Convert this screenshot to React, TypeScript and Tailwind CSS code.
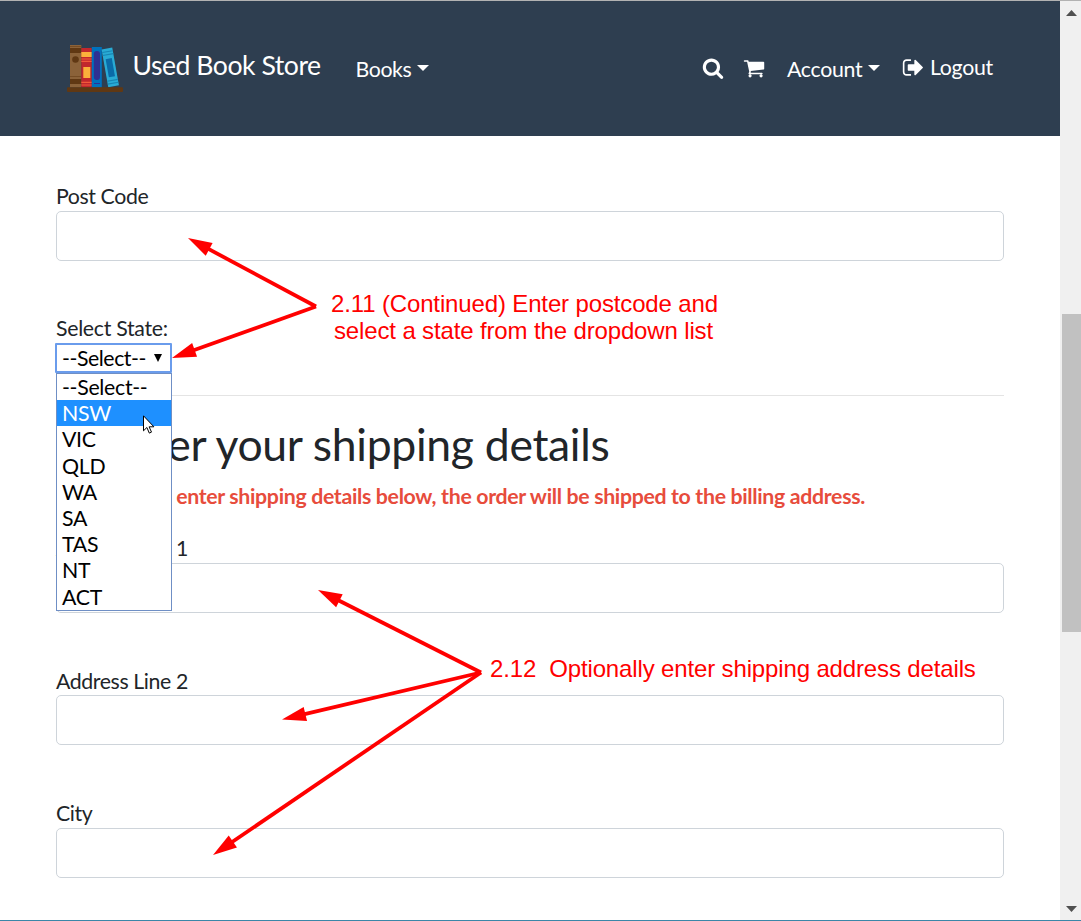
import React from "react";

const states = ["--Select--", "NSW", "VIC", "QLD", "WA", "SA", "TAS", "NT", "ACT"];

const arrows = [
  { x1: 316, y1: 305.5, x2: 188, y2: 237 },
  { x1: 316, y1: 305.5, x2: 172, y2: 357 },
  { x1: 481, y1: 671.5, x2: 318, y2: 589 },
  { x1: 481, y1: 671.5, x2: 282, y2: 718.5 },
  { x1: 481, y1: 671.5, x2: 213, y2: 854 },
];

function Books() {
  return (
    <svg className="h-[48px] w-[56px] shrink-0" viewBox="0 0 56 48">
      <rect x="3" y="0" width="11.3" height="42.5" fill="#8b6239" />
      <rect x="3" y="3" width="11.3" height="5" fill="#603813" />
      <rect x="3" y="34" width="11.3" height="5" fill="#603813" />
      <path d="M3 1.5h11.3M3 31.5h11.3" stroke="#754c24" />
      <circle cx="8.5" cy="14.5" r="3.3" fill="#603813" />
      <rect x="14.3" y="3" width="10.5" height="39.5" fill="#c1272d" />
      <rect x="14.3" y="7" width="10.5" height="5" fill="#fbb03b" />
      <rect x="16.3" y="22" width="7" height="11" fill="#fbb03b" />
      <path d="M14.3 14h10.5M14.3 16.3h10.5M14.3 37.3h10.5M14.3 40h10.5" stroke="#f15a3a" strokeWidth="1.2" />
      <rect x="24.8" y="2" width="10" height="40.5" fill="#0071bc" />
      <rect x="26.8" y="6" width="6.2" height="29" rx="3" fill="#2e3192" />
      <path d="M27 38.5h6" stroke="#2e3192" />
      <g transform="translate(34.6 4.4) rotate(-10)">
        <rect width="10.8" height="38.4" fill="#29abd4" />
        <path d="M0 3.2h10.8M0 6.2h10.8M0 32.3h10.8M0 35.3h10.8" stroke="#1785b4" strokeWidth="1.1" />
        <rect x="2.3" y="10.3" width="6.2" height="18.5" fill="#0a6ba8" />
      </g>
      <rect x="0" y="42.3" width="56" height="4.7" rx="1" fill="#603813" />
    </svg>
  );
}

function Icon({ d, className }: { d: string; className: string }) {
  return (
    <svg viewBox="0 0 1792 1792" fill="currentColor" className={className}>
      <path d={d} />
    </svg>
  );
}

const searchPath =
  "M1216 832q0-185-131.5-316.5t-316.5-131.5-316.5 131.5-131.5 316.5 131.5 316.5 316.5 131.5 316.5-131.5 131.5-316.5zm512 832q0 52-38 90t-90 38q-54 0-90-38l-343-342q-179 124-399 124-143 0-273.5-55.5t-225-150-150-225-55.5-273.5 55.5-273.5 150-225 225-150 273.5-55.5 273.5 55.5 225 150 150 225 55.5 273.5q0 220-124 399l343 343q37 37 37 90z";
const cartPath =
  "M704 1536q0 52-38 90t-90 38-90-38-38-90 38-90 90-38 90 38 38 90zm896 0q0 52-38 90t-90 38-90-38-38-90 38-90 90-38 90 38 38 90zm128-1088v512q0 24-16.5 42.5t-40.5 21.5l-1044 122q13 60 13 70 0 16-24 64h920q26 0 45 19t19 45-19 45-45 19h-1024q-26 0-45-19t-19-45q0-11 8-31.5t16-36 21.5-40 15.5-29.5l-177-823h-204q-26 0-45-19t-19-45 19-45 45-19h256q16 0 28.5 6.5t19.5 15.5 13 24.5 8 26 5.5 29.5 4.5 26h1201q26 0 45 19t19 45z";
const signOutPath =
  "M704 1440q0 4 1 20t.5 26.5-3 23.5-10 19.5-20.5 6.5h-320q-119 0-203.5-84.5t-84.5-203.5v-704q0-119 84.5-203.5t203.5-84.5h320q13 0 22.5 9.5t9.5 22.5q0 4 1 20t.5 26.5-3 23.5-10 19.5-20.5 6.5h-320q-66 0-113 47t-47 113v704q0 66 47 113t113 47h312l11.5 1 11.5 3 8 5.5 7 9 2 13.5zm928-544q0 26-19 45l-544 544q-19 19-45 19t-45-19-19-45v-288h-448q-26 0-45-19t-19-45v-384q0-26 19-45t45-19h448v-288q0-26 19-45t45-19 45 19l544 544q19 19 19 45z";

function Caret() {
  return <span className="h-0 w-0 border-x-[6px] border-t-[6px] border-x-transparent border-t-white" />;
}

function Navbar() {
  return (
    <header className="flex h-[135px] shrink-0 items-start justify-between bg-[#2e3e50] pr-[66px] pl-[66.5px] text-white">
      <div className="flex items-start">
        <div className="mt-[44px] flex">
          <Books />
        </div>
        <div className="mt-[46px] ml-[10px] w-[223px] text-[26.6px] leading-[36px] tracking-[-0.47px] whitespace-nowrap">
          Used Book Store
        </div>
        <div className="mt-[52px] flex h-8 w-[73px] text-[21.3px] leading-8 tracking-[-0.4px]">
          <span className="w-[62px]">Books</span>
          <span className="flex pt-[12px]">
            <Caret />
          </span>
        </div>
      </div>
      <nav className="flex items-start text-[21.3px] leading-8 tracking-[-0.3px]">
        <Icon d={searchPath} className="mt-[56px] h-[22px] w-[22px]" />
        <Icon d={cartPath} className="mt-[56px] ml-[19px] h-[22px] w-[22px]" />
        <div className="mt-[52px] ml-[22px] flex w-[94px]">
          <span className="w-[81px]">Account</span>
          <span className="flex pt-[12px]">
            <Caret />
          </span>
        </div>
        <Icon d={signOutPath} className="mt-[55px] ml-[21px] h-[23px] w-[23px]" />
        <span className="mt-[50px] ml-[5px] w-[64px]">Logout</span>
      </nav>
    </header>
  );
}

function Field({ label }: { label: string }) {
  return (
    <div className="mb-[56px] flex flex-col">
      <label className="h-[26.5px] text-[21.3px] leading-[24px] tracking-[-0.4px]">{label}</label>
      <div className="h-[50px] rounded-[5px] border border-[#ced4da] bg-white" />
    </div>
  );
}

function StateSelect() {
  return (
    <div className="relative w-[116px] text-[21.3px] tracking-[-0.3px] text-black">
      <div className="-ml-px flex h-[30px] w-[117px] items-center rounded-[1px] border-2 border-[#6a9cec] bg-white pt-[1px] pl-[5px] whitespace-nowrap">
        <span className="w-[92px] tracking-[-0.45px]">--Select--</span>
        <svg viewBox="0 0 8 8" className="mb-[2px] h-[8px] w-[8px] shrink-0">
          <path d="M0 0h8L4 8z" fill="#000" />
        </svg>
      </div>
      <div className="absolute top-[30px] left-0 z-10 flex h-[238px] w-[116px] flex-col border border-[#6f8fc5] bg-white">
        {states.map((s) => (
          <div
            key={s}
            className={
              s === "NSW"
                ? "h-[26.2px] bg-[#1e90ff] pl-[5px] leading-[26px] text-white"
                : "h-[26.2px] pl-[5px] leading-[26px]"
            }
          >
            {s}
          </div>
        ))}
        <svg viewBox="0 0 12 19" className="absolute top-[41px] left-[86px] h-[19px] w-[12px]">
          <path d="M.5.8v15l3.4-3.3 2.4 5.6 2.2-1-2.4-5.3h4.8z" fill="#fff" stroke="#000" />
        </svg>
      </div>
    </div>
  );
}

function Annotations() {
  return (
    <div className="pointer-events-none absolute inset-0 z-20 font-['Liberation_Sans',Arial,sans-serif] text-[24px] leading-[27px] tracking-[-0.14px] whitespace-pre text-[#ff0000]">
      <svg className="absolute inset-0" width="1081" height="921">
        {arrows.map(({ x1, y1, x2, y2 }) => {
          const len = Math.hypot(x2 - x1, y2 - y1);
          const ang = (Math.atan2(y2 - y1, x2 - x1) * 180) / Math.PI;
          return (
            <g key={`${x2}-${y2}`} transform={`translate(${x1} ${y1}) rotate(${ang})`} fill="#ff0000">
              <rect x="0" y="-1.9" width={len - 20} height="3.8" />
              <path d={`M${len} 0l-24-7.3v14.6z`} />
            </g>
          );
        })}
      </svg>
      <div className="absolute top-[289px] left-[331px]">2.11 (Continued) Enter postcode and</div>
      <div className="absolute top-[316px] left-[334px]">select a state from the dropdown list</div>
      <div className="absolute top-[654px] left-[490px]">{"2.12  Optionally enter shipping address details"}</div>
    </div>
  );
}

function Scrollbar() {
  return (
    <div className="flex w-[21px] shrink-0 flex-col items-end bg-[#f0f0f0]">
      <div className="flex h-[313px] w-[19px] justify-center pt-[9px]">
        <svg viewBox="0 0 11 6" className="h-[6px] w-[11px]">
          <path d="M5.5 0L11 6H0z" fill="#505050" />
        </svg>
      </div>
      <div className="h-[318px] w-[19px] bg-[#c1c1c1]" />
      <div className="flex w-[19px] grow items-end justify-center pb-[8px]">
        <svg viewBox="0 0 11 6" className="h-[6px] w-[11px]">
          <path d="M0 0h11L5.5 6z" fill="#505050" />
        </svg>
      </div>
    </div>
  );
}

export default function App() {
  return (
    <div className="relative flex h-[921px] w-[1081px] flex-col overflow-hidden border-t border-b border-t-[#b2b2b2] border-b-[#3a86a8] bg-white font-[Lato,sans-serif] text-[#212529]">
      <div className="flex min-h-0 grow">
        <div className="flex w-[1060px] flex-col overflow-hidden">
          <Navbar />
          <main className="flex flex-col pt-[48px] pr-[56px] pl-[56px]">
            <Field label="Post Code" />
            <div className="h-[26.5px] text-[21.3px] leading-[23px] tracking-[-0.3px]">Select State:</div>
            <StateSelect />
            <div className="mt-[22px] h-px bg-[#e4e4e4]" />
            <h1 className="mt-[21px] h-[54px] text-[44.5px] leading-[54px] tracking-[-0.31px] whitespace-nowrap">
              2. Enter your shipping details
            </h1>
            <p className="mt-[12px] mb-[27px] h-[26px] text-[21.3px] leading-[26px] font-bold tracking-[-0.33px] whitespace-nowrap text-[#e74c3c]">
              If you do not enter shipping details below, the order will be shipped to the billing address.
            </p>
            <Field label="Address Line 1" />
            <Field label="Address Line 2" />
            <Field label="City" />
          </main>
        </div>
        <Scrollbar />
      </div>
      <Annotations />
    </div>
  );
}
